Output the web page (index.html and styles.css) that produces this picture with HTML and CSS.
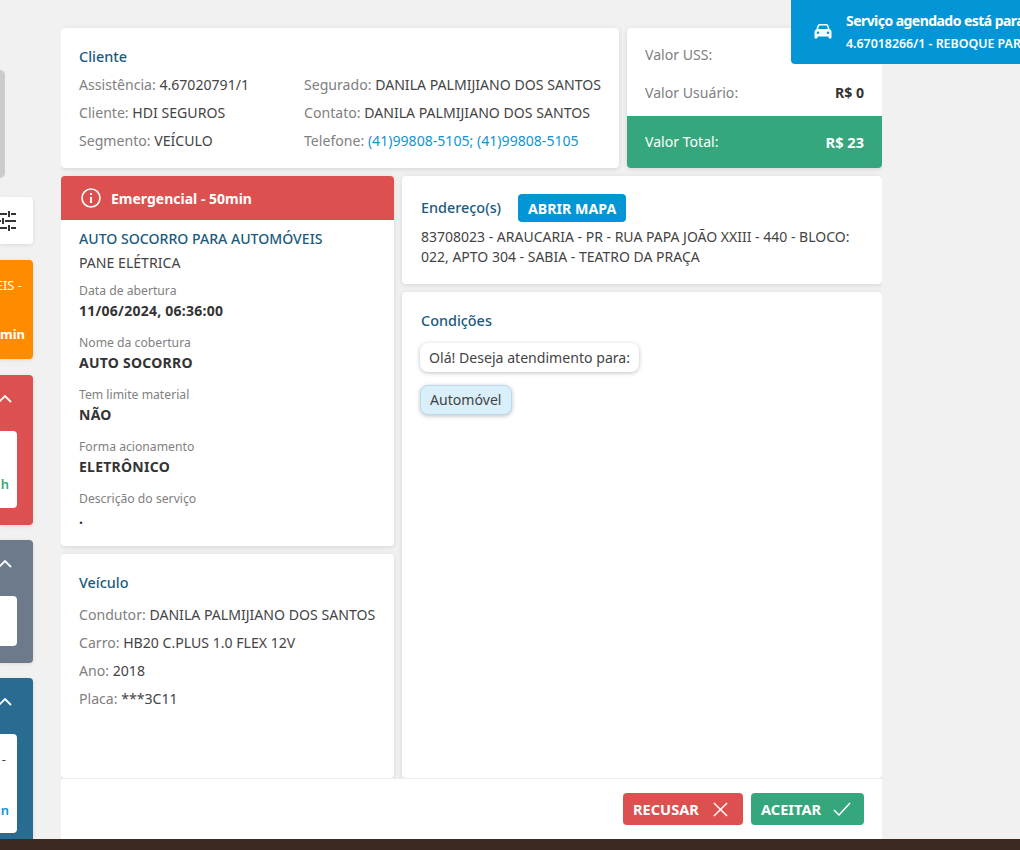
FILE: index.html
```html
<!DOCTYPE html>
<html lang="pt-BR">
<head>
<meta charset="utf-8">
<title>Serviço</title>
<link rel="stylesheet" href="styles.css">
</head>
<body>
<div class="stage">
  <aside class="sidebar">
    <div class="side-grey"></div>
    <div class="side-filter">
      <svg class="filter-icon" viewBox="0 0 20 20" width="20" height="20" fill="none" stroke="#333" stroke-width="2"><path d="M0 3H11M15 3H20M13 0V6M0 10H5M9 10H20M7 7V13M0 17H11M15 17H20M13 14V20"/></svg>
    </div>
    <div class="side-card side-orange"><span class="o1">EIS -</span><span class="o2">0min</span></div>
    <div class="side-card side-red">
      <svg class="chev" viewBox="0 0 14 8" width="14" height="8" fill="none" stroke="#fff" stroke-width="1.8"><path d="M1 7L7 1L13 7"/></svg>
      <div class="inner inner-red"><span class="green-h">h</span></div>
    </div>
    <div class="side-card side-slate">
      <svg class="chev" viewBox="0 0 14 8" width="14" height="8" fill="none" stroke="#fff" stroke-width="1.8"><path d="M1 7L7 1L13 7"/></svg>
      <div class="inner inner-slate"></div>
    </div>
    <div class="side-card side-blue">
      <svg class="chev" viewBox="0 0 14 8" width="14" height="8" fill="none" stroke="#fff" stroke-width="1.8"><path d="M1 7L7 1L13 7"/></svg>
      <div class="inner inner-blue"><span class="dash">-</span><span class="blue-in">in</span></div>
    </div>
  </aside>
  <main class="modal">
    <div class="modal-body">
      <div class="row-top">
        <section class="card client">
          <h3 class="title">Cliente</h3>
          <div class="client-grid">
            <div class="col">
              <p class="line"><span class="lbl">Assistência:</span> 4.67020791/1</p>
              <p class="line"><span class="lbl">Cliente:</span> HDI SEGUROS</p>
              <p class="line"><span class="lbl">Segmento:</span> VEÍCULO</p>
            </div>
            <div class="col">
              <p class="line"><span class="lbl">Segurado:</span> DANILA PALMIJIANO DOS SANTOS</p>
              <p class="line"><span class="lbl">Contato:</span> DANILA PALMIJIANO DOS SANTOS</p>
              <p class="line"><span class="lbl">Telefone:</span> <a class="tel">(41)99808-5105; (41)99808-5105</a></p>
            </div>
          </div>
        </section>
        <section class="card values">
          <div class="val-row"><span class="lbl">Valor USS:</span></div>
          <div class="val-row"><span class="lbl">Valor Usuário:</span><b>R$ 0</b></div>
          <div class="val-total"><span>Valor Total:</span><b>R$ 23</b></div>
        </section>
      </div>
      <div class="row-main">
        <div class="col-left">
          <section class="card service">
            <div class="emerg">
              <svg viewBox="0 0 20 20" width="20" height="20" fill="none" stroke="#fff" stroke-width="1.6"><circle cx="10" cy="10" r="9"/><path d="M10 9V15" stroke-width="2"/><path d="M10 5V7" stroke-width="2"/></svg>
              <span>Emergencial - 50min</span>
            </div>
            <div class="service-body">
              <h4 class="svc-title">AUTO SOCORRO PARA AUTOMÓVEIS</h4>
              <p class="svc-sub">PANE ELÉTRICA</p>
              <div class="field"><span class="f-l">Data de abertura</span><strong class="f-v">11/06/2024, 06:36:00</strong></div>
              <div class="field"><span class="f-l">Nome da cobertura</span><strong class="f-v">AUTO SOCORRO</strong></div>
              <div class="field"><span class="f-l">Tem limite material</span><strong class="f-v">NÃO</strong></div>
              <div class="field"><span class="f-l">Forma acionamento</span><strong class="f-v">ELETRÔNICO</strong></div>
              <div class="field"><span class="f-l">Descrição do serviço</span><strong class="f-v">.</strong></div>
            </div>
          </section>
          <section class="card vehicle">
            <h3 class="title">Veículo</h3>
            <p class="line"><span class="lbl">Condutor:</span> DANILA PALMIJIANO DOS SANTOS</p>
            <p class="line"><span class="lbl">Carro:</span> HB20 C.PLUS 1.0 FLEX 12V</p>
            <p class="line"><span class="lbl">Ano:</span> 2018</p>
            <p class="line"><span class="lbl">Placa:</span> ***3C11</p>
          </section>
        </div>
        <div class="col-right">
          <section class="card address">
            <div class="addr-head"><h3 class="title">Endereço(s)</h3><button class="map-btn">ABRIR MAPA</button></div>
            <p class="addr-text">83708023 - ARAUCARIA - PR - RUA PAPA JOÃO XXIII - 440 - BLOCO: 022, APTO 304 - SABIA - TEATRO DA PRAÇA</p>
          </section>
          <section class="card conditions">
            <h3 class="title">Condições</h3>
            <div class="bubble">Olá! Deseja atendimento para:</div>
            <div class="bubble bubble-sel">Automóvel</div>
          </section>
        </div>
      </div>
    </div>
    <footer class="actions">
      <button class="act act-no">RECUSAR
        <svg viewBox="0 0 16 16" width="15" height="15" fill="none" stroke="#fff" stroke-width="1.6"><path d="M1 1L15 15M15 1L1 15"/></svg>
      </button>
      <button class="act act-yes">ACEITAR
        <svg viewBox="0 0 18 14" width="18" height="14" fill="none" stroke="#fff" stroke-width="1.5"><path d="M1 8L6 13L17 1"/></svg>
      </button>
    </footer>
  </main>
</div>
<div class="strip"></div>
<div class="toast">
  <svg viewBox="0 0 18 16" width="18" height="16" fill="#fff"><path d="M3.6 1.5C3.9.6 4.700 0 5.600 0H12.400C13.300 0 14.100.6 14.400 1.500L15.700 5.500C16.500 5.800 17.500 6.600 17.500 7.800V13.500C17.500 14 17.100 14.500 16.500 14.500H15.500C15 14.500 14.500 14 14.500 13.500V12.500H3.500V13.500C3.500 14 3 14.500 2.500 14.500H1.500C.9 14.500.5 14 .5 13.500V7.800C.5 6.600 1.500 5.800 2.300 5.500ZM4 5H14L13 2.200C12.900 1.800 12.600 1.600 12.200 1.600H5.800C5.400 1.600 5.100 1.800 5 2.200ZM4 7.500A1.300 1.300 0 1 0 4 10.100 1.300 1.300 0 1 0 4 7.500ZM14 7.500A1.300 1.300 0 1 0 14 10.100 1.300 1.300 0 1 0 14 7.500Z" fill-rule="evenodd"/></svg>
  <div class="toast-text">
    <div class="t1">Serviço agendado está para</div>
    <div class="t2">4.67018266/1 - REBOQUE PARA</div>
  </div>
</div>
</body>
</html>
```
FILE: styles.css
```css
* { box-sizing: border-box; }
html, body { margin: 0; height: 850px; overflow: hidden; }
body { background: #f1f1f1; font-family: "Noto Sans", sans-serif; font-size: 14.1px; color: #444; position: relative; display: flex; flex-direction: column; }
p, h3, h4 { margin: 0; }
.stage { height: 839px; display: flex; overflow: hidden; }
.strip { height: 11px; background: #3b2a22; }

.sidebar { width: 61px; flex: none; padding-top: 70px; overflow: hidden; }
.side-grey { width: 5px; height: 108px; background: #ccc; border-radius: 0 8px 8px 0; margin-bottom: 19px; }
.side-filter { width: 33px; height: 47px; background: #fff; border-radius: 0 4px 4px 0; box-shadow: 0 1px 4px rgba(0,0,0,.1); margin-bottom: 16px; display: flex; align-items: center; justify-content: flex-end; padding-right: 17px; overflow: hidden; }
.filter-icon { flex: none; }
.side-card { width: 33px; border-radius: 0 4px 4px 0; margin-bottom: 16px; box-shadow: 0 1px 4px rgba(0,0,0,.1); overflow: hidden; display: flex; flex-direction: column; align-items: flex-end; }
.side-orange { height: 99px; background: #ff8c00; color: #fff; font-size: 13px; padding: 16px 8px 16px 0; justify-content: space-between; font-weight: 700; white-space: nowrap; }
.o1 { font-weight: 400; margin-right: 3px; }
.side-red { height: 150px; background: #dc5050; margin-bottom: 15px; }
.side-slate { height: 123px; background: #6c7a8c; margin-bottom: 15px; }
.side-blue { height: 170px; background: #2a6b92; margin-bottom: 0; }
.chev { margin: 20px 21px 0 0; flex: none; }
.inner { width: 17px; margin: 28px 16px 0 0; background: #fff; border-radius: 0 4px 4px 0; display: flex; flex-direction: column; align-items: flex-end; justify-content: flex-end; font-size: 13px; font-weight: 600; padding: 0 8px 15px 0; flex: none; }
.inner-red { height: 77px; }
.inner-slate { height: 50px; }
.inner-blue { height: 99px; justify-content: space-between; padding: 16px 8px 14px 0; }
.green-h { color: #36a77d; }
.blue-in { color: #1495d0; }
.dash { color: #444; font-weight: 400; margin-right: 3px; }

.modal { width: 821px; flex: none; display: flex; flex-direction: column; }
.modal-body { flex: 1; min-height: 0; padding-top: 28px; display: flex; flex-direction: column; gap: 8px; overflow: hidden; }
.row-top { display: flex; gap: 8px; height: 140px; flex: none; }
.card { background: #fff; border-radius: 4px; box-shadow: 0 1px 5px rgba(0,0,0,.12); }
.title { font-size: 14.4px; font-weight: 500; color: #1a5a80; line-height: 20px; }
.line { line-height: 28px; white-space: nowrap; color: #444; }
.lbl { color: #808080; }
.client { width: 558px; padding: 19px 18px 0; }
.client-grid { display: flex; gap: 54px; margin-top: 4px; }
.client-grid .col:first-child { width: 171px; }
.tel { color: #1495d0; }
.values { width: 255px; display: flex; flex-direction: column; overflow: hidden; }
.val-row { display: flex; justify-content: space-between; align-items: center; height: 38px; padding: 0 18px; }
.val-row:first-child { margin-top: 8px; height: 37px; }
.val-row b { color: #333; font-weight: 700; }
.val-total { margin-top: auto; height: 52px; background: #36a77d; color: #fff; display: flex; justify-content: space-between; align-items: center; padding: 0 18px 1px; }
.val-total b { font-size: 14.6px; }

.row-main { display: flex; gap: 8px; flex: 1; min-height: 0; }
.col-left { width: 333px; display: flex; flex-direction: column; gap: 8px; }
.col-right { width: 480px; display: flex; flex-direction: column; gap: 8px; }
.service { height: 370px; overflow: hidden; flex: none; }
.emerg { height: 44px; background: #dc5050; color: #fff; display: flex; align-items: center; gap: 10px; padding: 0 20px; font-weight: 700; font-size: 14px; }
.service-body { padding: 9px 18px 0; }
.svc-title { font-size: 14.1px; font-weight: 500; color: #1a5a80; line-height: 20px; }
.svc-sub { line-height: 28px; margin-bottom: 5px; }
.field { display: flex; flex-direction: column; height: 52px; }
.f-l { font-size: 12.2px; color: #808080; line-height: 18px; }
.f-v { font-weight: 700; font-size: 14px; letter-spacing: .25px; color: #333; line-height: 22px; }
.vehicle { flex: 1; padding: 19px 18px 0; }
.vehicle .title { margin-bottom: 8px; }
.address { height: 108px; flex: none; padding: 18px 18px 0 19px; }
.addr-head { display: flex; align-items: center; gap: 17px; }
.map-btn { height: 28px; width: 108px; padding: 0; background: #0396d6; color: #fff; border: 0; border-radius: 4px; font: 700 14.2px "Noto Sans", sans-serif; }
.addr-text { font-size: 14px; line-height: 20px; margin-top: 5px; }
.conditions { flex: 1; padding: 19px 18px 0; }
.conditions .title { padding-left: 1px; }
.bubble { display: table; margin-top: 12px; height: 29px; padding: 0 9px; line-height: 29px; border-radius: 8px; background: #fff; box-shadow: 0 1px 4px rgba(0,0,0,.25); }
.bubble-sel { background: #d9eff9; border: 1px solid #b7dcee; margin-top: 13px; height: 30px; padding: 0 9px; line-height: 28px; }

.actions { height: 61px; flex: none; background: #fff; border-top: 1px solid #ececec; display: flex; justify-content: flex-end; align-items: flex-start; gap: 8px; padding: 14px 18px 0 0; }
.act { height: 32px; border: 0; border-radius: 4px; color: #fff; font: 700 14.6px "Noto Sans", sans-serif; display: flex; align-items: center; justify-content: space-between; }
.act-no { width: 120px; background: #dc5050; padding: 0 15px 0 10px; }
.act-yes { width: 113px; background: #36a77d; padding: 0 13px 0 10px; }

.toast { position: absolute; left: 791px; top: 0; width: 229px; height: 64px; background: #0396d6; border-radius: 0 0 0 4px; color: #fff; display: flex; align-items: center; gap: 14px; padding-left: 23px; overflow: hidden; white-space: nowrap; }
.toast svg { flex: none; }
.t1 { font-weight: 700; font-size: 14px; letter-spacing: -.55px; line-height: 22px; }
.t2 { font-size: 12.4px; font-weight: 600; line-height: 20px; margin-top: 2px; }
```
